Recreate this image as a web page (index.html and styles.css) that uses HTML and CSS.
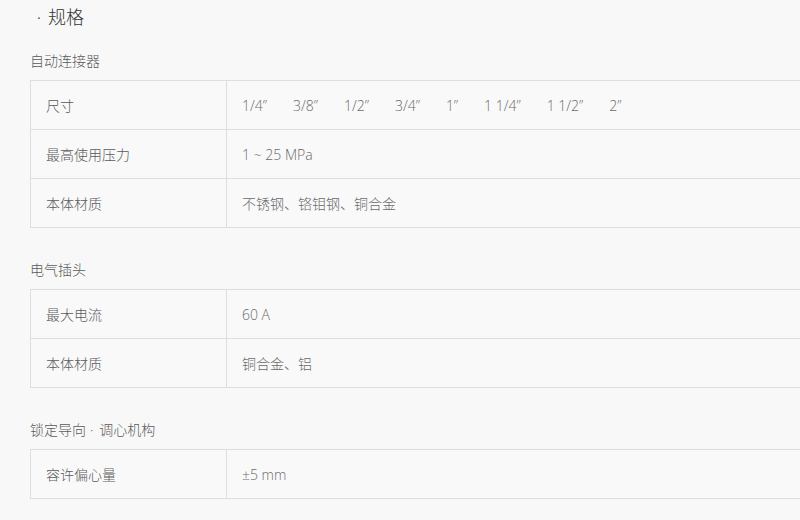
FILE: index.html
```html
<!DOCTYPE html>
<html lang="zh">
<head>
<meta charset="utf-8">
<link rel="stylesheet" href="styles.css">
</head>
<body>
<div class="page">
  <h2 class="heading"><span class="dot">·</span>规格</h2>

  <section class="group">
    <h3 class="group-title">自动连接器</h3>
    <table class="spec">
      <tr>
        <th>尺寸</th>
        <td><div class="sizes"><span>1/4”</span><span>3/8”</span><span>1/2”</span><span>3/4”</span><span>1”</span><span>1 1/4”</span><span>1 1/2”</span><span>2”</span></div></td>
      </tr>
      <tr>
        <th>最高使用压力</th>
        <td>1 ~ 25 MPa</td>
      </tr>
      <tr>
        <th>本体材质</th>
        <td>不锈钢、铬钼钢、铜合金</td>
      </tr>
    </table>
  </section>

  <section class="group">
    <h3 class="group-title">电气插头</h3>
    <table class="spec">
      <tr>
        <th>最大电流</th>
        <td>60 A</td>
      </tr>
      <tr>
        <th>本体材质</th>
        <td>铜合金、铝</td>
      </tr>
    </table>
  </section>

  <section class="group">
    <h3 class="group-title">锁定导向<span class="sep">·</span>调心机构</h3>
    <table class="spec">
      <tr>
        <th>容许偏心量</th>
        <td>±5 mm</td>
      </tr>
    </table>
  </section>
</div>
</body>
</html>
```
FILE: styles.css
```css
html, body {
  margin: 0;
  padding: 0;
  background: #f8f8f8;
  overflow: hidden;
}

body {
  font-family: "Open Sans", "Noto Sans CJK SC Light", "Noto Sans CJK SC DemiLight", "Noto Sans CJK SC", sans-serif;
  font-weight: 300;
  color: #555;
  font-size: 14px;
}

.page {
  width: 1000px;
  padding: 5px 0 0 30px;
}

.heading {
  margin: 0 0 22px 0;
  font-size: 18px;
  font-weight: 300;
  line-height: 24px;
  color: #333;
}

.dot {
  display: inline-block;
  width: 18px;
  text-align: center;
}

.group {
  margin-bottom: 32px;
}

.group-title {
  margin: 0 0 9px 0;
  font-size: 14px;
  font-weight: 300;
  line-height: 20px;
  color: #5a5a5a;
}

.sep {
  margin: 0 6px 0 4px;
}

.spec {
  width: 100%;
  border-collapse: collapse;
  background: #f9f9f9;
}

.spec th,
.spec td {
  border: 1px solid #dedede;
  height: 49px;
  padding: 0 15px;
  text-align: left;
  font-weight: 300;
  vertical-align: middle;
  box-sizing: border-box;
}

.spec th {
  width: 196px;
  color: #5a5a5a;
}

.spec td {
  color: #6a6a6a;
}

.sizes {
  display: flex;
  gap: 26px;
}
```
